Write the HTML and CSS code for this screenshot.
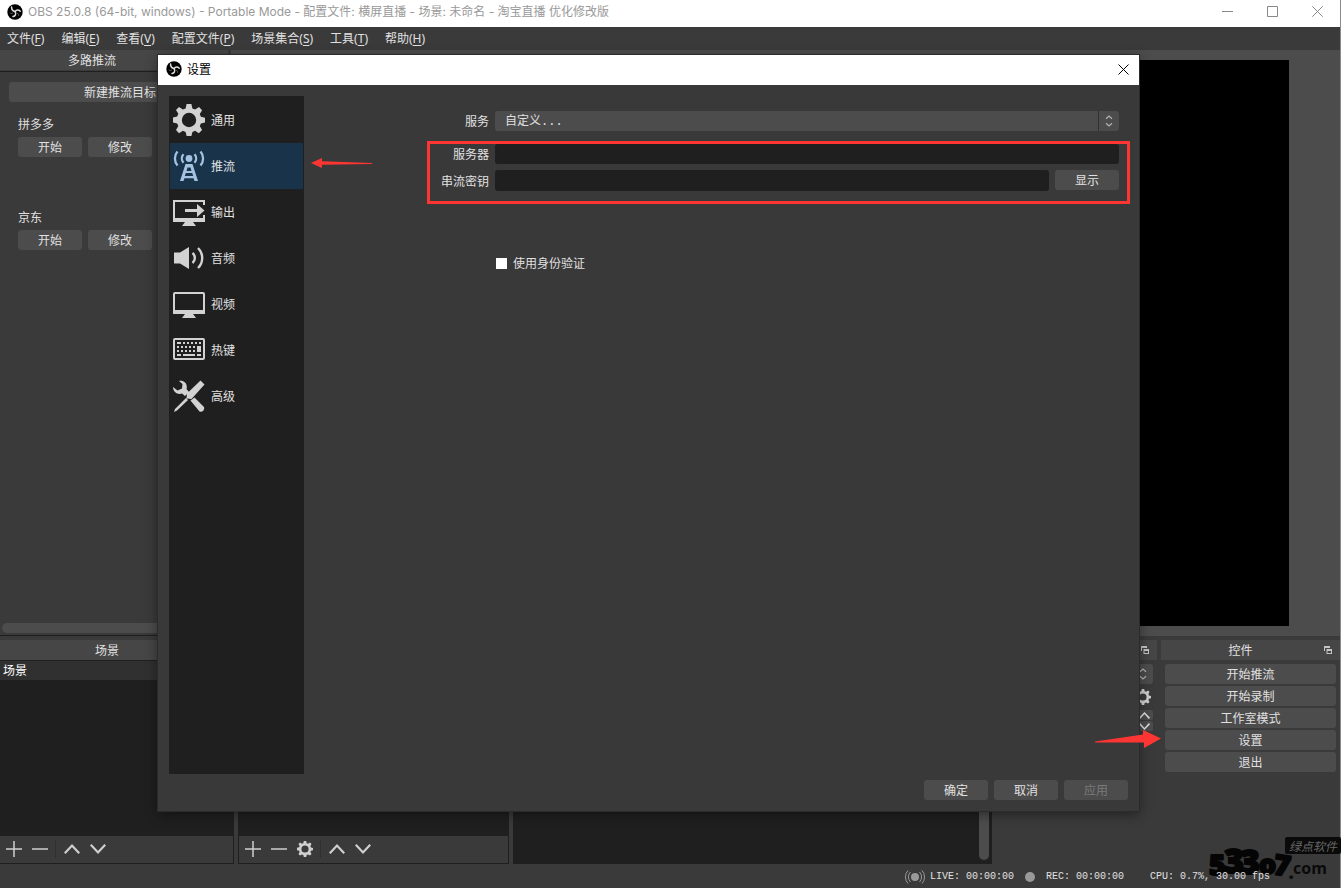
FILE: index.html
```html
<!DOCTYPE html>
<html lang="zh-CN">
<head>
<meta charset="utf-8">
<title>OBS 25.0.8</title>
<link rel="stylesheet" href="styles.css">
</head>
<body>
<svg class="defs" aria-hidden="true">
  <symbol id="logo" viewBox="0 0 16 16">
    <circle cx="8" cy="8" r="7.700" fill="#000"/>
    <g fill="none" stroke="#dcdcdc" stroke-width="1.500" stroke-linecap="round">
      <path d="M4.600 3C4.400 5.400 5.800 7 8.200 7.600"/>
      <path d="M13.200 7.200C11.600 5.400 9.400 5.600 8.200 7.600"/>
      <path d="M6 12.600C8.400 12.200 9.400 10 8.200 7.600"/>
    </g>
    <path d="M2.800 8.800C3.800 9.800 5.200 9.600 6 8.600M11.600 11.800C12 10.600 11.400 9.400 10.200 9.200" fill="none" stroke="#777" stroke-width=".8"/>
  </symbol>
  <symbol id="gear" viewBox="0 0 32 32">
    <path fill="currentColor" fill-rule="evenodd" d="M13.600 0h4.800l1 4.400 2.700 1.100 3.900-2.400 3.100 3.100-2.300 3.800 1.100 2.800 4.100 1v4.600l-4.100 1-1.100 2.700 2.300 3.900-3.300 3.200-3.700-2.400-2.700 1.100-1 4.100h-4.800l-1-4.100-2.700-1.100-3.900 2.400L3 25.900l2.300-3.800-1.100-2.700L0 18.400v-4.800l4.200-1 1.100-2.800L3 6l3-3 3.900 2.500 2.700-1.100zM16 8.800a7.200 7.200 0 1 0 0 14.400a7.200 7.200 0 1 0 0-14.400z"/>
  </symbol>
  <symbol id="plus" viewBox="0 0 16 16"><path d="M8 0v16M0 8h16" stroke="currentColor" stroke-width="1.500"/></symbol>
  <symbol id="minus" viewBox="0 0 16 16"><path d="M0 8h16" stroke="currentColor" stroke-width="1.500"/></symbol>
  <symbol id="up" viewBox="0 0 16 16"><path d="M.8 12.200L8 4.500l7.200 7.700" fill="none" stroke="currentColor" stroke-width="2.200"/></symbol>
  <symbol id="down" viewBox="0 0 16 16"><path d="M.8 3.800L8 11.500l7.200-7.700" fill="none" stroke="currentColor" stroke-width="2.200"/></symbol>
  <symbol id="updown" viewBox="0 0 8 12"><path d="M1 3.800L4 1l3 2.800M1 8.200L4 11l3-2.800" fill="none" stroke="#b4b4b4" stroke-width="1.200"/></symbol>
  <symbol id="float" viewBox="0 0 8 8"><path d="M0 0h6v2H1v3H0zM2.500 3H8v5H2.500zM3.500 5v2H7V5z" fill="#c4c4c4" fill-rule="evenodd"/></symbol>
</svg>

<div class="window">
  <header class="titlebar">
    <svg class="logo"><use href="#logo"/></svg>
    <h1 class="title">OBS 25.0.8 (64-bit, windows) - Portable Mode - 配置文件: 横屏直播 - 场景: 未命名 - 淘宝直播 优化修改版</h1>
    <div class="window-controls">
      <button aria-label="最小化"><svg viewBox="0 0 11 11"><path d="M0 5.500h11"/></svg></button>
      <button aria-label="最大化"><svg viewBox="0 0 11 11"><path d="M.5.500h10v10H.5z"/></svg></button>
      <button aria-label="关闭"><svg viewBox="0 0 11 11"><path d="M.3.300l10.400 10.400M10.700.300L.3 10.700"/></svg></button>
    </div>
  </header>
  <nav class="menubar">
    <button>文件(<u>F</u>)</button>
    <button>编辑(<u>E</u>)</button>
    <button>查看(<u>V</u>)</button>
    <button>配置文件(<u>P</u>)</button>
    <button>场景集合(<u>S</u>)</button>
    <button>工具(<u>T</u>)</button>
    <button>帮助(<u>H</u>)</button>
  </nav>

  <main class="work">
    <section class="multi">
      <h2 class="dock-title multi-title">多路推流</h2>
      <div class="multi-body">
        <button class="btn new-target">新建推流目标</button>
        <div class="target">
          <span>拼多多</span>
          <div class="pair"><button class="btn small">开始</button><button class="btn small">修改</button></div>
        </div>
        <div class="target">
          <span>京东</span>
          <div class="pair"><button class="btn small">开始</button><button class="btn small">修改</button></div>
        </div>
        <div class="hscroll"></div>
      </div>
    </section>
    <section class="preview"><div class="canvas"></div></section>
  </main>

  <section class="docks">
    <div class="dock scenes">
      <h2 class="dock-title">场景</h2>
      <div class="list"><div class="row">场景</div></div>
      <div class="toolbar">
        <button aria-label="添加场景"><svg><use href="#plus"/></svg></button>
        <button aria-label="删除场景"><svg><use href="#minus"/></svg></button>
        <i class="sep"></i>
        <button aria-label="上移场景"><svg><use href="#up"/></svg></button>
        <button aria-label="下移场景"><svg><use href="#down"/></svg></button>
      </div>
    </div>
    <div class="dock sources">
      <div class="dock-title"></div>
      <div class="list"></div>
      <div class="toolbar">
        <button aria-label="添加来源"><svg><use href="#plus"/></svg></button>
        <button aria-label="删除来源"><svg><use href="#minus"/></svg></button>
        <button aria-label="来源属性"><svg><use href="#gear"/></svg></button>
        <i class="sep"></i>
        <button aria-label="上移来源"><svg><use href="#up"/></svg></button>
        <button aria-label="下移来源"><svg><use href="#down"/></svg></button>
      </div>
    </div>
    <div class="dock mixer">
      <div class="dock-title"></div>
      <div class="list"><div class="vscroll"></div></div>
    </div>
    <div class="dock transitions">
      <div class="dock-title"><svg class="float"><use href="#float"/></svg></div>
      <div class="transition-body">
        <button class="btn combo" aria-label="转场"><svg><use href="#updown"/></svg></button>
        <button class="gear" aria-label="转场属性"><svg><use href="#gear"/></svg></button>
        <div class="spin">
          <button aria-label="增加"><svg viewBox="0 3 16 10"><use href="#up" width="16" height="16"/></svg></button>
          <button aria-label="减少"><svg viewBox="0 3 16 10"><use href="#down" width="16" height="16"/></svg></button>
        </div>
      </div>
    </div>
    <div class="dock controls">
      <h2 class="dock-title">控件<svg class="float"><use href="#float"/></svg></h2>
      <div class="control-list">
        <button class="btn">开始推流</button>
        <button class="btn">开始录制</button>
        <button class="btn">工作室模式</button>
        <button class="btn">设置</button>
        <button class="btn">退出</button>
      </div>
    </div>
  </section>

  <footer class="status">
    <svg class="live" viewBox="0 0 20 14"><circle cx="10" cy="7" r="4"/><path d="M5.500 2a7 7 0 0 0 0 10M14.500 2a7 7 0 0 1 0 10M3 .500a9.500 9.500 0 0 0 0 13M17 .500a9.500 9.500 0 0 1 0 13"/></svg>
    <span class="live-text">LIVE: 00:00:00</span>
    <i class="dot"></i>
    <span class="rec-text">REC: 00:00:00</span>
    <span>CPU: 0.7%, 30.00 fps</span>
  </footer>

  <div class="watermark">
    <span class="tag">绿点软件</span>
    <svg class="brand" viewBox="0 0 120 36">
      <g class="digits">
        <text x="1" y="30" font-size="28">5</text>
        <text x="16" y="28" font-size="34">3</text>
        <text x="32" y="29" font-size="34">3</text>
        <text x="51" y="29" font-size="27">o</text>
        <text x="66" y="30" font-size="28" transform="rotate(8 73 20)">7</text>
      </g>
      <text class="com" x="80" y="34" font-size="22">.</text>
      <text class="com" x="85" y="29" font-size="16">com</text>
    </svg>
  </div>
</div>

<section class="dialog" role="dialog" aria-labelledby="dialog-title">
  <header class="dialog-bar">
    <svg class="logo"><use href="#logo"/></svg>
    <h2 id="dialog-title">设置</h2>
    <button class="dialog-close" aria-label="关闭设置"><svg viewBox="0 0 11 11"><path d="M.5.500l10 10M10.500.500l-10 10"/></svg></button>
  </header>
  <div class="dialog-body">
    <nav class="side">
      <button><svg viewBox="0 0 32 32"><use href="#gear"/></svg><span>通用</span></button>
      <button class="active"><svg viewBox="0 0 32 32"><circle cx="16" cy="8.500" r="3.400" fill="currentColor"/><path d="M10.500 4.200a6.500 6.500 0 0 0 0 8.600M21.500 4.200a6.500 6.500 0 0 1 0 8.600M4.500 1.600a10.500 10.500 0 0 0 0 13.800M27.500 1.600a10.500 10.500 0 0 1 0 13.800" fill="none" stroke="currentColor" stroke-width="2.300"/><path fill="currentColor" fill-rule="evenodd" d="M12.500 14h7L25 31h-3.500l-1-2.800h-9l-1 2.800H7zM14.500 17.500l-1 3.500h5l-1-3.500zM12.800 23l-1 3h8.400l-1-3z"/></svg><span>推流</span></button>
      <button><svg viewBox="0 0 32 32"><path d="M31 9V5H1v19h30v-5" fill="none" stroke="currentColor" stroke-width="2"/><path d="M0 22h32v4H0zM12 26h8l3 4H9zM12 13h12V8l7.500 6.500-7.500 6.500v-5H12z" fill="currentColor"/></svg><span>输出</span></button>
      <button><svg viewBox="0 0 32 32"><path d="M1 10.500h6L16 5v22l-9-5.500H1z" fill="currentColor"/><path d="M19.500 11a6.500 6.500 0 0 1 0 10M25 6a14 14 0 0 1 0 20" fill="none" stroke="currentColor" stroke-width="2.400"/></svg><span>音频</span></button>
      <button><svg viewBox="0 0 32 32"><rect x="1" y="5" width="30" height="20" rx="1" fill="none" stroke="currentColor" stroke-width="2"/><path d="M0 22h32v4H0zM12 26h8l3 4H9z" fill="currentColor"/></svg><span>视频</span></button>
      <button><svg viewBox="0 0 32 32"><rect x="1" y="5" width="30" height="20" rx="1" fill="none" stroke="currentColor" stroke-width="2"/><path d="M4 9h4M10 9h2M14 9h2M18 9h2M22 9h2M26 9h2M4 13h2M8 13h2M12 13h2M16 13h2M20 13h2M4 17h2M8 17h2M12 17h2M16 17h2M20 17h2M4 21h4M10 21h12M24 21h4" stroke="currentColor" stroke-width="2"/><path d="M24 12h4v6h-4z" fill="currentColor"/></svg><span>热键</span></button>
      <button><svg viewBox="0 0 32 32"><path fill="currentColor" d="M27.500.500L31.500 4.500 18.500 19l-5-.500.500-5zM17.500 20.500l4-3 9.500 9.500c1 3-1.500 5.500-4.500 4.500zM1 32l1-3 11-11 2 2L4 30.500zM6 1c5-1 9 3 7.500 8L16 12l-4 4-3-2.500C4.500 15 0 12 0 7l4.500 3.500L9 8.500 9.500 4z"/></svg><span>高级</span></button>
    </nav>
    <form class="form">
      <label for="service">服务</label>
      <div class="select-wrap">
        <select id="service"><option>自定义...</option></select>
        <svg><use href="#updown"/></svg>
      </div>
      <label class="server" for="server">服务器</label>
      <input class="field server" id="server" type="text">
      <label for="key">串流密钥</label>
      <div class="key-row"><input class="field" id="key" type="password"><button class="btn small" type="button">显示</button></div>
      <div class="auth"><input type="checkbox" id="auth"><label for="auth">使用身份验证</label></div>
    </form>
    <div class="highlight"></div>
    <svg class="arrow-left" viewBox="0 0 62 12"><path d="M0 6L11 1v3.200L61 6v1L11 7.800V11z" fill="#fd3634"/></svg>
  </div>
  <footer class="dialog-foot">
    <button class="btn small">确定</button>
    <button class="btn small">取消</button>
    <button class="btn small" disabled>应用</button>
  </footer>
</section>
<svg class="arrow-right" viewBox="0 0 66 18"><path d="M66 8.500L48 0v4.500L0 11.500v1L49 12.500V18z" fill="#fd3634"/></svg>
</body>
</html>
```
FILE: styles.css
```css
* { box-sizing: border-box; }
body {
  margin: 0;
  font: 12px/16px "Noto Sans", "Noto Sans CJK SC", sans-serif;
  color: #e1e0e1;
  background: #3a3a3a;
  position: relative;
}
h1, h2 { margin: 0; font-size: 12px; font-weight: 400; }
button, input, select { font: inherit; color: inherit; }
button { border: 0; padding: 0; background: none; }
svg { display: block; flex: none; }
.defs { position: absolute; width: 0; height: 0; }
.window {
  min-height: 100vh;
  display: flex;
  flex-direction: column;
  border-right: 1px solid #8a8a8a;
  position: relative;
}
.titlebar {
  height: 27px;
  display: flex;
  align-items: center;
  padding: 0 0 4px 7px;
  background: #fff;
  color: #999;
}
.logo { width: 16px; height: 16px; }
.title { margin-left: 5px; white-space: nowrap; font-family: Inter, "Noto Sans CJK SC", sans-serif; }
.window-controls { margin-left: auto; display: flex; }
.window-controls button { width: 45px; height: 23px; display: grid; place-items: center; }
.window-controls svg, .dialog-close svg { width: 11px; height: 11px; fill: none; stroke: #888; }
.menubar { height: 23px; display: flex; align-items: center; gap: 17px; padding: 1px 0 0 7px; }
.menubar u { text-underline-offset: 2px; }

.work { flex: 1; display: flex; gap: 3px; }
.multi { width: 228px; display: flex; flex-direction: column; border-bottom: 1px solid #1f1f1f; overflow: hidden; }
.dock-title {
  height: 20px;
  padding: 1px 20px 0 0;
  text-align: center;
  line-height: 20px;
  background: #464646;
  position: relative;
}
.multi-title { padding-right: 44px; }
.multi-body {
  flex: 1;
  margin-top: 1px;
  border-top: 1px solid #1f1f1f;
  padding: 10px 0 2px 2px;
  display: flex;
  flex-direction: column;
}
.btn { height: 20px; padding-top: 2px; border-radius: 3px; background: #4c4c4c; line-height: 18px; text-align: center; }
.btn.small { width: 64px; }
.btn:disabled { color: #7a7a7a; }
.new-target { width: 222px; margin-left: 7px; flex: none; }
.target { margin: 15px 0 38px 16px; }
.target span { display: block; }
.pair { display: flex; gap: 6px; margin-top: 4px; }
.hscroll { margin-top: auto; height: 10px; border-radius: 5px; background: #4c4c4c; }
.preview { flex: 1; background: #4c4c4c; padding: 10px 0; display: flex; justify-content: center; }
.canvas { background: #000; aspect-ratio: 16 / 9; }

.docks { display: flex; gap: 4px; height: 228px; padding-top: 4px; }
.dock { display: flex; flex-direction: column; }
.scenes { width: 234px; }
.sources { width: 271px; }
.mixer { width: 479px; }
.transitions { flex: 1; }
.controls { width: 179px; }
.float { position: absolute; right: 8px; top: 6px; width: 8px; height: 8px; }
.list { flex: 1; margin-top: 1px; background: #1f1f1f; display: flex; flex-direction: column; }
.scenes .list, .sources .list { margin-top: 0; border-top: 1px solid #1f1f1f; }
.row { height: 19px; padding-left: 3px; line-height: 19px; background: #303030; color: #fff; }
.toolbar {
  height: 28px;
  display: flex;
  align-items: center;
  padding: 0 0 2px 1px;
  border: 1px solid #1f1f1f;
  border-top: 0;
  color: #cfcfcf;
}
.scenes .toolbar { border-left: 0; }
.toolbar button { width: 26px; height: 24px; display: grid; place-items: center; }
.toolbar svg { width: 16px; height: 16px; }
.sep { width: 1px; height: 18px; margin: 0 3px 0 2px; background: #303030; }
.vscroll { flex: 1; width: 10px; margin: 0 3px 4px auto; border-radius: 5px; background: #4c4c4c; }
.transition-body { padding: 4px 4px 0 0; display: flex; flex-direction: column; align-items: flex-end; }
.combo { width: 100%; display: flex; align-items: center; justify-content: flex-end; padding: 0 6px 0 0; }
.combo svg { width: 8px; height: 12px; }
.gear { margin: 5px 2px; color: #cfcfcf; }
.gear svg { width: 16px; height: 16px; }
.spin { display: grid; gap: 1px; }
.spin button { width: 40px; height: 10px; border-radius: 2px; background: #4c4c4c; display: flex; justify-content: flex-end; align-items: center; padding-right: 3px; }
.spin svg { width: 11px; height: 7px; }
.control-list { padding: 4px; display: grid; gap: 2px; }

.status {
  height: 24px;
  display: flex;
  align-items: center;
  justify-content: flex-end;
  padding: 2px 70px 0 0;
  font: 10px/16px "Liberation Mono", monospace;
  position: relative;
  z-index: 2;
}
.live { width: 20px; height: 14px; margin-right: 5px; fill: #999; }
.live path { fill: none; stroke: #999; }
.dot { width: 10px; height: 10px; border-radius: 50%; background: #999; margin: 0 11px; }
.rec-text { margin-right: 26px; }
.watermark { position: absolute; right: 0; bottom: 7px; width: 132px; height: 44px; }
.tag {
  position: absolute;
  right: -1px;
  top: 0;
  width: 56px;
  height: 17px;
  border-radius: 2px;
  background: #0a0a0a;
  color: #666;
  font-family: "Noto Sans CJK SC", sans-serif;
  font-style: italic;
  line-height: 17px;
  text-align: center;
}
.brand { position: absolute; left: 0; bottom: 0; width: 120px; height: 36px; overflow: visible; }
.digits { font-family: "Open Sans", sans-serif; font-weight: 800; fill: #050505; stroke: #050505; stroke-width: 2; stroke-linejoin: round; }
.com { font-family: "Open Sans", sans-serif; font-weight: 700; fill: #0a0a0a; }

.dialog {
  position: absolute;
  inset: 55px 202px 77px 158px;
  z-index: 3;
  display: flex;
  flex-direction: column;
  background: #393939;
  box-shadow: 0 0 0 1px #2b2b2b, 0 3px 12px rgba(0, 0, 0, .45);
}
.dialog-bar { height: 30px; display: flex; align-items: center; padding: 0 10px 2px 8px; background: #fff; color: #000; }
.dialog-bar h2 { margin-left: 5px; padding-top: 2px; }
.dialog-close { margin-left: auto; }
.dialog-close svg { stroke: #000; }
.dialog-body { flex: 1; display: flex; padding: 11px 11px 0; position: relative; }
.side { width: 135px; padding: 1px; background: #1f1f1f; display: flex; flex-direction: column; }
.side button { height: 46px; display: flex; align-items: center; gap: 6px; padding-left: 3px; }
.side span { padding-top: 2px; }
.side svg { width: 32px; height: 32px; color: #d2d2d2; }
.side .active { background: #19334b; }
.side .active svg { color: #a3c1e0; }
.form {
  flex: 1;
  display: grid;
  grid-template-columns: 185px 1fr;
  column-gap: 6px;
  align-content: start;
  align-items: center;
  padding: 15px 9px 0 0;
}
.form label { padding-top: 2px; }
.form > label { text-align: right; }
.select-wrap { position: relative; height: 20px; }
.select-wrap select {
  appearance: none;
  width: 100%;
  height: 20px;
  border: 0;
  border-radius: 3px;
  padding: 2px 30px 0 10px;
  background: linear-gradient(#303030, #303030) right 20px top / 1px 100% no-repeat #4c4c4c;
  font-family: "Liberation Mono", "Noto Sans CJK SC", monospace;
}
.select-wrap svg { position: absolute; right: 6px; top: 4px; width: 8px; height: 12px; pointer-events: none; }
.field { width: 100%; min-width: 0; height: 20px; border: 0; border-radius: 3px; background: #1f1f1f; padding: 0 6px; }
.server { margin: 13px 0 6px; }
.key-row { display: flex; gap: 6px; }
.key-row .field { height: 21px; }
.key-row .btn { flex: none; }
.auth { grid-column: 2; display: flex; align-items: center; gap: 6px; margin-top: 63px; }
.auth input { appearance: none; width: 11px; height: 11px; margin: 0 0 0 1px; background: #fff; }
.highlight { position: absolute; left: 269px; right: 9px; top: 56px; height: 63px; border: 3px solid #fd3634; pointer-events: none; }
.arrow-left { position: absolute; left: 153px; top: 72px; width: 62px; height: 12px; }
.arrow-right { position: absolute; right: 180px; bottom: 140px; width: 66px; height: 18px; z-index: 4; }
.dialog-foot { display: flex; justify-content: flex-end; gap: 6px; padding: 6px 11px 11px; }
```
